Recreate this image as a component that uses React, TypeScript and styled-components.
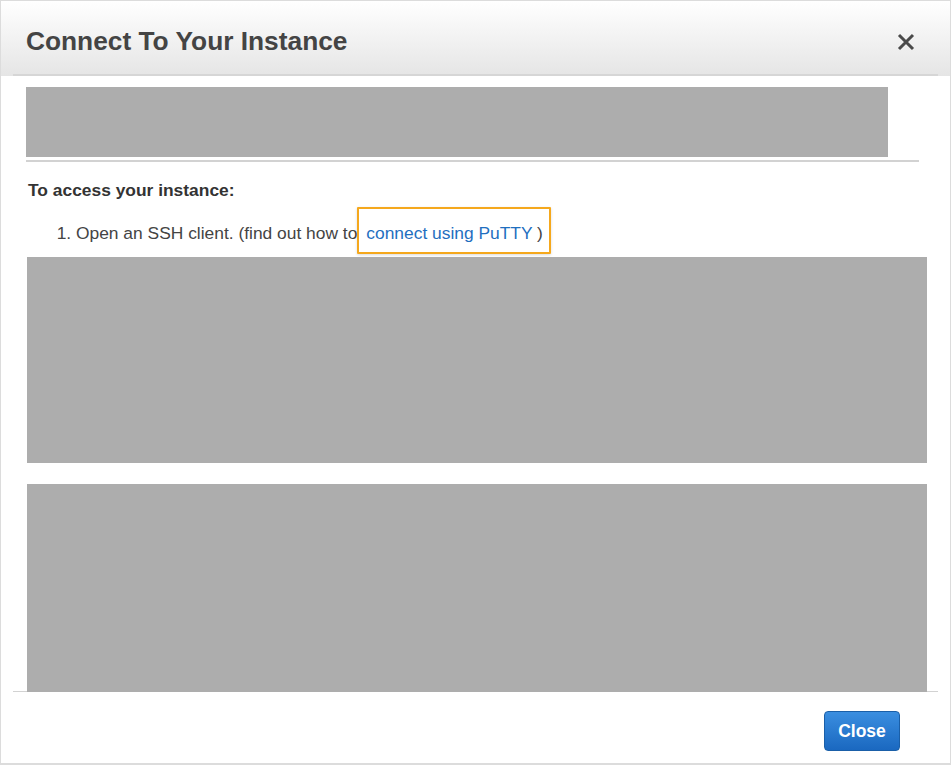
import React from "react";
import styled, { createGlobalStyle } from "styled-components";

const Global = createGlobalStyle`
  html, body { margin: 0; padding: 0; background: #fff; }
  body { font-family: "Liberation Sans", Arial, sans-serif; }
`;

const Dialog = styled.div`
  box-sizing: border-box;
  width: 951px;
  height: 765px;
  border: 1px solid #dcdcdc;
  border-bottom-width: 2px;
  display: flex;
  flex-direction: column;
  background: #fff;
`;

const Header = styled.div`
  height: 75px;
  flex-shrink: 0;
  background: linear-gradient(#ffffff, #e5e5e5);
  padding: 0 12px;
`;

const HeaderInner = styled.div`
  box-sizing: border-box;
  height: 75px;
  border-bottom: 2px solid #d6d6d6;
  display: flex;
  align-items: center;
  justify-content: space-between;
  padding: 8px 22px 0 13px;
`;

const Title = styled.h1`
  margin: 0;
  font-size: 26.3px;
  font-weight: bold;
  color: #444;
`;

const CloseX = styled.button`
  border: 0;
  background: none;
  padding: 0;
  width: 20px;
  height: 20px;
  display: flex;
  align-items: center;
  justify-content: center;
  cursor: pointer;
`;

const Body = styled.div`
  flex: 1;
  min-height: 0;
  padding: 11px 24px 0 25px;
  display: flex;
  flex-direction: column;
  overflow: hidden;
  position: relative;
  z-index: 1;
  margin-bottom: -1px;
`;

const Redacted = styled.div<{ $w: number; $h: number; $ml?: number; $mt?: number }>`
  background: #adadad;
  width: ${(p) => p.$w}px;
  height: ${(p) => p.$h}px;
  margin-left: ${(p) => p.$ml ?? 0}px;
  margin-top: ${(p) => p.$mt ?? 0}px;
  flex-shrink: 0;
`;

const Rule = styled.div`
  height: 2px;
  width: 893px;
  background: #d2d2d2;
  margin-top: 3px;
  flex-shrink: 0;
`;

const Heading = styled.div`
  margin: 18px 0 0 2px;
  font-size: 17.4px;
  font-weight: bold;
  color: #333;
`;

const List = styled.ol`
  margin: 22px 0 0 0;
  padding-left: 50px;
  font-size: 17.4px;
  color: #444;
`;

const Item = styled.li`
  line-height: 20px;
`;

const LinkBox = styled.span`
  display: inline-block;
  border: 2px solid #f5a81d;
  border-radius: 1px;
  padding: 14px 6px 9px 7px;
  margin: -16px 0 -11px 0;
  box-shadow: 0 1px 3px rgba(0, 0, 0, 0.15);
  color: #444;
`;

const Link = styled.a`
  color: #1f6fbf;
  text-decoration: none;
`;

const Footer = styled.div`
  margin: 0 12px;
  border-top: 1px solid #d2d2d2;
  height: 72px;
  flex-shrink: 0;
  display: flex;
  justify-content: flex-end;
  align-items: flex-start;
  padding: 19px 38px 0 0;
  box-sizing: border-box;
`;

const Button = styled.button`
  width: 76px;
  height: 40px;
  border-radius: 4px;
  border: 1px solid #1a5fa8;
  background: linear-gradient(#3a8ee0, #1a68c0);
  color: #fff;
  font-family: "Liberation Sans", Arial, sans-serif;
  font-weight: bold;
  font-size: 17.5px;
  cursor: pointer;
`;

export default function App() {
  return (
    <>
      <Global />
      <Dialog>
        <Header>
          <HeaderInner>
            <Title>Connect To Your Instance</Title>
            <CloseX aria-label="Close">
              <svg width="18" height="18" viewBox="0 0 18 18">
                <path d="M2 2 L16 16 M16 2 L2 16" stroke="#4a4a4a" strokeWidth="3" />
              </svg>
            </CloseX>
          </HeaderInner>
        </Header>
        <Body>
          <Redacted $w={862} $h={70} />
          <Rule />
          <Heading>To access your instance:</Heading>
          <List>
            <Item>
              Open an SSH client. (find out how to
              <LinkBox>
                {" "}
                <Link href="#">connect using PuTTY</Link> )
              </LinkBox>
            </Item>
          </List>
          <Redacted $w={900} $h={206} $ml={1} $mt={14} />
          <Redacted $w={900} $h={230} $ml={1} $mt={21} />
        </Body>
        <Footer>
          <Button>Close</Button>
        </Footer>
      </Dialog>
    </>
  );
}
